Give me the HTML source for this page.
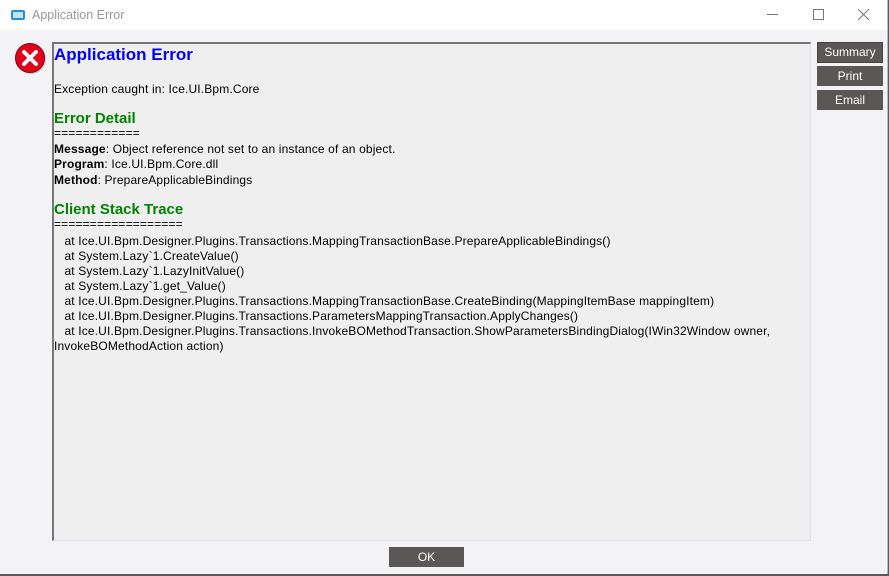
<!DOCTYPE html>
<html><head><meta charset="utf-8"><style>
body{margin:0;width:889px;height:576px;overflow:hidden;background:#5a5a5a;font-family:"Liberation Sans",sans-serif;}
.win{position:absolute;left:0;top:0;width:887px;height:574px;background:#f3f3f5;border-right:1px solid #bbb;}
.tb{position:absolute;left:0;top:0;width:887px;height:30px;background:#fff;}
.t{position:absolute;white-space:nowrap;font-size:12px;color:#000;letter-spacing:0.15px;}
.box{position:absolute;left:52px;top:42px;width:756px;height:496px;background:#efefef;border-left:2px solid #777;border-top:2px solid #777;border-right:1px solid #e2e2e2;border-bottom:1px solid #e2e2e2;}
.btn{position:absolute;left:817px;width:66px;height:20px;background:#5a5856;color:#fff;font-size:12px;text-align:center;line-height:20px;}
.h{font-weight:bold;font-size:15px;color:#008000;letter-spacing:0;}
</style></head><body>
<div class="win">
<div class="tb">
<svg style="position:absolute;left:10px;top:8px" width="16" height="14"><rect x="1" y="2" width="14" height="10" rx="2" fill="#2a8fd0"/><rect x="3" y="4" width="10" height="6" fill="#bfe3f7"/></svg>
<div class="t" style="left:32px;top:8px;color:#999;font-size:12.5px;letter-spacing:0">Application Error</div>
<div style="position:absolute;left:767px;top:14px;width:11px;height:1px;background:#777"></div>
<div style="position:absolute;left:813px;top:9px;width:9px;height:9px;border:1px solid #777"></div>
<svg style="position:absolute;left:858px;top:9px" width="12" height="12"><path d="M0 0L11 11M11 0L0 11" stroke="#777" stroke-width="1"/></svg>
</div>
<svg style="position:absolute;left:14px;top:42px" width="34" height="34"><circle cx="17" cy="17" r="15" fill="#999" opacity=".5"/><circle cx="16" cy="16" r="14.5" fill="#e0001a" stroke="#8a0010" stroke-width="1"/><path d="M10 10L22 22M22 10L10 22" stroke="#fff" stroke-width="4" stroke-linecap="round"/></svg>
<div class="box"></div>
<div class="t" style="left:54px;top:45px;font-size:17px;font-weight:bold;color:#0000ff;letter-spacing:0">Application Error</div>
<div class="t" style="left:54px;top:82px">Exception caught in: Ice.UI.Bpm.Core</div>
<div class="t h" style="left:54px;top:110px">Error Detail</div>
<div class="t" style="left:54px;top:126px">============</div>
<div class="t" style="left:54px;top:142px"><b>Message</b>: Object reference not set to an instance of an object.</div>
<div class="t" style="left:54px;top:157px"><b>Program</b>: Ice.UI.Bpm.Core.dll</div>
<div class="t" style="left:54px;top:173px"><b>Method</b>: PrepareApplicableBindings</div>
<div class="t h" style="left:54px;top:201px">Client Stack Trace</div>
<div class="t" style="left:54px;top:217px">==================</div>
<div class="t" style="left:54px;top:234px">&nbsp;&nbsp; at Ice.UI.Bpm.Designer.Plugins.Transactions.MappingTransactionBase.PrepareApplicableBindings()</div>
<div class="t" style="left:54px;top:249px">&nbsp;&nbsp; at System.Lazy`1.CreateValue()</div>
<div class="t" style="left:54px;top:264px">&nbsp;&nbsp; at System.Lazy`1.LazyInitValue()</div>
<div class="t" style="left:54px;top:279px">&nbsp;&nbsp; at System.Lazy`1.get_Value()</div>
<div class="t" style="left:54px;top:294px">&nbsp;&nbsp; at Ice.UI.Bpm.Designer.Plugins.Transactions.MappingTransactionBase.CreateBinding(MappingItemBase mappingItem)</div>
<div class="t" style="left:54px;top:309px">&nbsp;&nbsp; at Ice.UI.Bpm.Designer.Plugins.Transactions.ParametersMappingTransaction.ApplyChanges()</div>
<div class="t" style="left:54px;top:324px">&nbsp;&nbsp; at Ice.UI.Bpm.Designer.Plugins.Transactions.InvokeBOMethodTransaction.ShowParametersBindingDialog(IWin32Window owner,</div>
<div class="t" style="left:54px;top:339px">InvokeBOMethodAction action)</div>
<div class="btn" style="top:42px;height:19px;line-height:19px;border:1px solid #444;width:64px">Summary</div>
<div class="btn" style="top:66px">Print</div>
<div class="btn" style="top:90px">Email</div>
<div class="btn" style="left:389px;top:547px;width:75px">OK</div>
</div>
</body></html>
